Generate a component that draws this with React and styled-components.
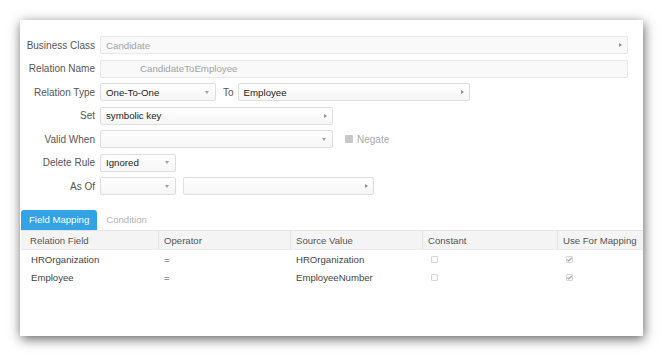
import styled, { createGlobalStyle } from "styled-components";

const GlobalStyle = createGlobalStyle`
  html, body {
    margin: 0;
    padding: 0;
    background: #fff;
  }

  body {
    font-family: "Liberation Sans", Arial, sans-serif;
    font-size: 10px;
    color: #444;
  }
`;

const mappings = [
  { field: "HROrganization", operator: "=", source: "HROrganization" },
  { field: "Employee", operator: "=", source: "EmployeeNumber" },
];

const columns = ["Relation Field", "Operator", "Source Value", "Constant", "Use For Mapping"];

export default function App() {
  return (
    <>
      <GlobalStyle />
      <Page>
        <Panel>
          <Form>
            <Row>
              <Label>Business Class</Label>
              <Fields>
                <Box width={528} muted>
                  <Value muted>Candidate</Value>
                  <Arrow />
                </Box>
              </Fields>
            </Row>
            <Row>
              <Label>Relation Name</Label>
              <Fields>
                <Box width={528} muted indent={39}>
                  <Value muted>CandidateToEmployee</Value>
                </Box>
              </Fields>
            </Row>
            <Row>
              <Label>Relation Type</Label>
              <Fields>
                <Box width={116}>
                  <Value>One-To-One</Value>
                  <Caret />
                </Box>
                <InlineLabel>To</InlineLabel>
                <Box width={232}>
                  <Value>Employee</Value>
                  <Arrow />
                </Box>
              </Fields>
            </Row>
            <Row>
              <Label>Set</Label>
              <Fields>
                <Box width={233}>
                  <Value>symbolic key</Value>
                  <Arrow />
                </Box>
              </Fields>
            </Row>
            <Row>
              <Label>Valid When</Label>
              <Fields>
                <Box width={233}>
                  <Value />
                  <Caret />
                </Box>
                <Negate>
                  <NegateBox />
                  Negate
                </Negate>
              </Fields>
            </Row>
            <Row>
              <Label>Delete Rule</Label>
              <Fields>
                <Box width={76}>
                  <Value>Ignored</Value>
                  <Caret />
                </Box>
              </Fields>
            </Row>
            <Row>
              <Label>As Of</Label>
              <Fields gap={7}>
                <Box width={76}>
                  <Value />
                  <Caret />
                </Box>
                <Box width={191}>
                  <Value />
                  <Arrow />
                </Box>
              </Fields>
            </Row>
          </Form>

          <Tabs>
            <Tab active>Field Mapping</Tab>
            <Tab>Condition</Tab>
          </Tabs>

          <Table>
            <HeaderRow>
              {columns.map((c) => (
                <HeaderCell key={c}>{c}</HeaderCell>
              ))}
            </HeaderRow>
            {mappings.map((m) => (
              <DataRow key={m.field}>
                <Cell>{m.field}</Cell>
                <Cell>{m.operator}</Cell>
                <Cell>{m.source}</Cell>
                <Cell>
                  <Check />
                </Cell>
                <Cell>
                  <Check>
                    <svg width="7" height="7" viewBox="0 0 7 7">
                      <polyline points="1.3,3.6 2.8,5 5.8,1.8" fill="none" stroke="#a9a9a9" strokeWidth="1.2" />
                    </svg>
                  </Check>
                </Cell>
              </DataRow>
            ))}
          </Table>
        </Panel>
      </Page>
    </>
  );
}

const Page = styled.div`
  padding: 20px 21px 20px 20px;
`;

const Panel = styled.div`
  width: 623px;
  height: 316px;

  display: flex;
  flex-direction: column;

  background: #fff;
  box-shadow: 1px 3px 11px rgba(0, 0, 0, 0.62);
`;

const Form = styled.div`
  padding: 16px 15px 0 0;

  display: flex;
  flex-direction: column;
  gap: 5.5px;
`;

const Row = styled.div`
  height: 18px;

  display: grid;
  grid-template-columns: 75px 1fr;
  column-gap: 5px;
  align-items: center;
`;

const Label = styled.div`
  text-align: right;
  white-space: nowrap;
  color: #555;
`;

const Fields = styled.div`
  display: flex;
  align-items: center;
  gap: ${(props) => props.gap || 0}px;
`;

const Box = styled.div`
  width: ${(props) => props.width}px;
  height: 18px;
  box-sizing: border-box;
  padding: 0 5px 0 ${(props) => props.indent || 5}px;
  border: 1px solid ${(props) => (props.muted ? "#e8e8e8" : "#dedede")};
  border-radius: 2px;

  display: flex;
  align-items: center;

  background: ${(props) =>
    props.muted ? "#f9f9f9" : "linear-gradient(#ffffff, #f6f6f6)"};
`;

const Value = styled.span`
  flex: 1;
  white-space: nowrap;
  font-size: 9.7px;
  color: ${(props) => (props.muted ? "#a3a3a3" : "#222")};
`;

const Caret = styled.span`
  width: 0;
  height: 0;
  margin-right: 1px;
  border-left: 2.5px solid transparent;
  border-right: 2.5px solid transparent;
  border-top: 3px solid #a0a0a0;
`;

const Arrow = styled.span`
  width: 0;
  height: 0;
  border-top: 2.5px solid transparent;
  border-bottom: 2.5px solid transparent;
  border-left: 3px solid #909090;
`;

const InlineLabel = styled.span`
  margin: 0 4px 0 7px;
  color: #555;
`;

const Negate = styled.span`
  margin-left: 12px;

  display: flex;
  align-items: center;
  gap: 4px;

  color: #aaa;
`;

const NegateBox = styled.span`
  width: 8px;
  height: 8px;
  border-radius: 1px;
  background: #c9c9c9;
`;

const Tabs = styled.div`
  margin-top: 15px;
  padding-left: 1px;

  display: flex;
  gap: 1px;

  font-size: 9.6px;
`;

const Tab = styled.div`
  height: 20px;
  padding: 0 8px;
  border-radius: 3px 3px 0 0;

  line-height: 20px;
  color: ${(props) => (props.active ? "#fff" : "#b3b3b3")};

  background: ${(props) => (props.active ? "#33a3e6" : "transparent")};
`;

const Table = styled.div`
  margin-left: 1px;
  font-size: 9.6px;
`;

const HeaderRow = styled.div`
  height: 20px;
  box-sizing: border-box;
  border-top: 1px solid #e4e4e4;
  border-bottom: 1px solid #ececec;

  display: grid;
  grid-template-columns: 137px 132px 132px 135px 1fr;

  background: #f4f4f4;
`;

const HeaderCell = styled.div`
  padding-left: 5px;
  border-left: 1px solid #e2e2e2;

  display: flex;
  align-items: center;

  color: #555;

  &:first-child {
    padding-left: 9px;
    border-left: none;
  }
`;

const DataRow = styled.div`
  height: 18px;

  display: grid;
  grid-template-columns: 137px 132px 132px 135px 1fr;

  &:first-of-type {
    margin-top: 1px;
  }
`;

const Cell = styled.div`
  padding-left: 6px;

  display: flex;
  align-items: center;

  color: #444;

  &:first-child {
    padding-left: 10px;
  }
`;

const Check = styled.span`
  width: 7px;
  height: 7px;
  margin-left: 3px;
  box-sizing: border-box;
  border: 1px solid #d6d6d6;
  border-radius: 1px;

  display: flex;
  align-items: center;
  justify-content: center;

  background: #fafafa;

  svg {
    flex: none;
  }
`;
